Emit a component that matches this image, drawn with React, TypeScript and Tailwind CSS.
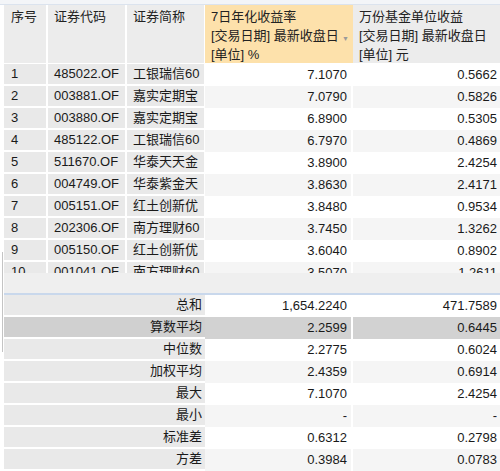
import React from "react";

type Row = { no: number; code: string; name: string; rate: string; unit: string };

const rows: Row[] = [
    { no: 1, code: "485022.OF", name: "工银瑞信60", rate: "7.1070", unit: "0.5662" },
    { no: 2, code: "003881.OF", name: "嘉实定期宝", rate: "7.0790", unit: "0.5826" },
    { no: 3, code: "003880.OF", name: "嘉实定期宝", rate: "6.8900", unit: "0.5305" },
    { no: 4, code: "485122.OF", name: "工银瑞信60", rate: "6.7970", unit: "0.4869" },
    { no: 5, code: "511670.OF", name: "华泰天天金", rate: "3.8900", unit: "2.4254" },
    { no: 6, code: "004749.OF", name: "华泰紫金天", rate: "3.8630", unit: "2.4171" },
    { no: 7, code: "005151.OF", name: "红土创新优", rate: "3.8480", unit: "0.9534" },
    { no: 8, code: "202306.OF", name: "南方理财60", rate: "3.7450", unit: "1.3262" },
    { no: 9, code: "005150.OF", name: "红土创新优", rate: "3.6040", unit: "0.8902" },
    { no: 10, code: "001041.OF", name: "南方理财60", rate: "3.5070", unit: "1.2611" },
];

const stats = [
    { label: "总和", rate: "1,654.2240", unit: "471.7589" },
    { label: "算数平均", rate: "2.2599", unit: "0.6445" },
    { label: "中位数", rate: "2.2775", unit: "0.6024" },
    { label: "加权平均", rate: "2.4359", unit: "0.6914" },
    { label: "最大", rate: "7.1070", unit: "2.4254" },
    { label: "最小", rate: "-", unit: "-" },
    { label: "标准差", rate: "0.6312", unit: "0.2798" },
    { label: "方差", rate: "0.3984", unit: "0.0783" },
];

const font = { fontFamily: '"Liberation Sans", "Noto Sans CJK SC", sans-serif' };

export default function App() {
    return (
        <div className="relative w-[500px] h-[471px] overflow-hidden bg-white text-[13px] text-[#1a1a1a]" style={font}>
            {/* top strip */}
            <div className="h-[5px] bg-[#f3f5f8] border-b border-[#dbe3ee]"></div>

            <div className="pl-[4px]">
                {/* header */}
                <div className="flex h-[58px] leading-[19px] text-[#222]">
                    <div className="w-[44px] bg-[#ececec] border-r-2 border-white pl-[7px] pt-[2px]">序号</div>
                    <div className="w-[79px] bg-[#ececec] border-r-2 border-white pl-[6px] pt-[2px]">证券代码</div>
                    <div className="w-[78px] bg-[#ececec] border-r border-white pl-[6px] pt-[2px]">证券简称</div>
                    <div className="w-[148px] bg-[#fde1ab] pl-[6px] pt-[2px] relative">
                        <div>7日年化收益率</div>
                        <div>[交易日期] 最新收盘日</div>
                        <div>[单位] %</div>
                        <span className="absolute right-[4px] top-[24px] text-[7px] text-[#9a9a9a]">▼</span>
                    </div>
                    <div className="flex-1 bg-[#ececec] pl-[6px] pt-[2px]">
                        <div>万份基金单位收益</div>
                        <div>[交易日期] 最新收盘日</div>
                        <div>[单位] 元</div>
                    </div>
                </div>

                {/* body */}
                <div className="h-[209px] overflow-hidden mt-[1px]">
                    {rows.map((r, i) => (
                        <div key={r.no} className="flex h-[22px] leading-[20px]">
                            <div className="w-[44px] bg-[#e9e9e9] border-r-2 border-b-2 border-white pl-[7px]">{r.no}</div>
                            <div className="w-[79px] bg-[#e9e9e9] border-r-2 border-b-2 border-white pl-[6px]">{r.code}</div>
                            <div className="w-[78px] bg-[#e9e9e9] border-r border-b-2 border-white pl-[6px] whitespace-nowrap">{r.name}</div>
                            <div className={`w-[148px] border-r-2 border-white text-right pr-[4px] leading-[22px] ${i % 2 === 1 ? "bg-[#f5f5f5]" : "bg-white"}`}>{r.rate}</div>
                            <div className={`flex-1 text-right pr-[3px] leading-[22px] ${i % 2 === 1 ? "bg-[#f5f5f5]" : "bg-white"}`}>{r.unit}</div>
                        </div>
                    ))}
                </div>

                {/* empty filler */}
                <div className="h-[22px] bg-[#efefef] border-b-2 border-[#c9d8ec]"></div>

                {/* summary */}
                {stats.map((s, i) => {
                    const selected = i === 1;
                    const rowBg = selected ? "bg-[#d2d2d2]" : i % 2 === 1 ? "bg-[#f5f5f5]" : "bg-white";
                    return (
                        <div key={s.label} className="flex h-[22px] leading-[22px]">
                            <div className={`w-[201px] border-b-2 border-white text-right pr-[3px] leading-[20px] ${selected ? "bg-[#d0d0d0]" : "bg-[#e9e9e9]"}`}>
                                {s.label}
                            </div>
                            <div className={`w-[148px] border-r-2 border-white text-right pr-[4px] ${rowBg}`}>{s.rate}</div>
                            <div className={`flex-1 text-right pr-[3px] ${rowBg}`}>{s.unit}</div>
                        </div>
                    );
                })}
            </div>

            {/* scrollbar edge */}
            <div className="absolute left-[2px] top-[252px] w-[1px] h-[100px] bg-[#c4c4c4]"></div>
        </div>
    );
}
